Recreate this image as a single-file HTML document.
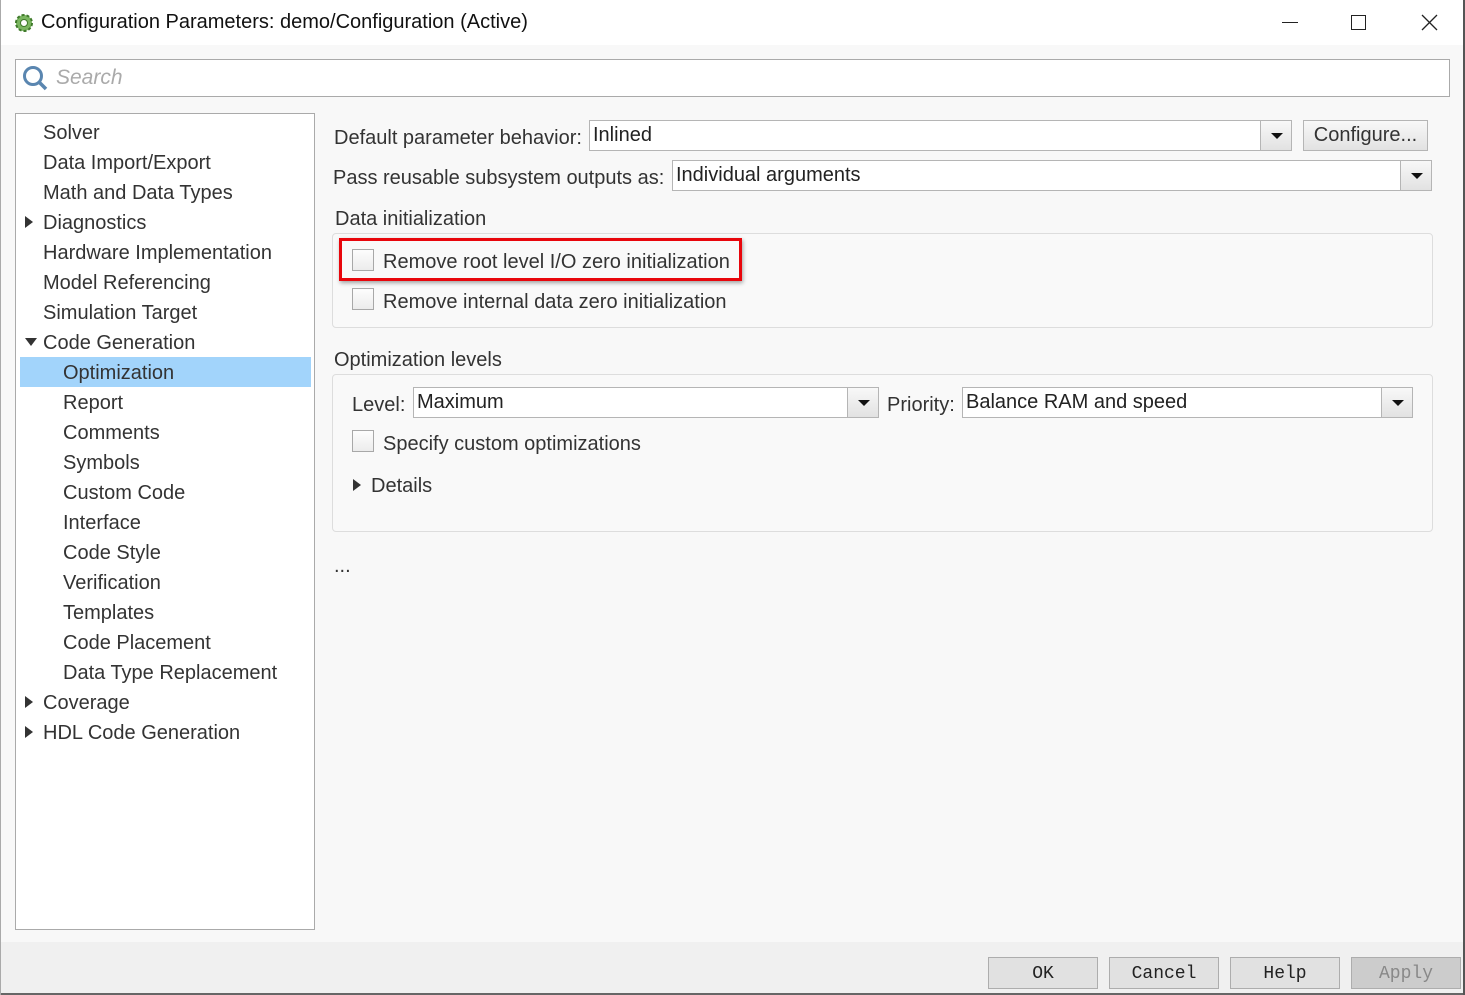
<!DOCTYPE html>
<html><head><style>
*{box-sizing:border-box;margin:0;padding:0}
body{width:1465px;height:995px;background:#f8f8f8;font-family:"Liberation Sans",sans-serif;color:#333;position:relative;overflow:hidden}
.a{position:absolute}
.t{font-size:20px;white-space:nowrap}
.tree div{position:absolute;font-size:20px;white-space:nowrap;color:#333}
.dd{position:absolute;background:#fff;border:1px solid #b5b5b5;font-size:20px;padding-left:3px;line-height:29px;color:#222}
.dd .btn{position:absolute;right:0;top:0;bottom:0;width:31px;border-left:1px solid #b5b5b5;background:linear-gradient(#f8f8f8,#e2e2e2)}
.dd .btn:after{content:"";position:absolute;left:10px;top:12px;border-left:6px solid transparent;border-right:6px solid transparent;border-top:6px solid #111}
.cb{position:absolute;width:22px;height:22px;border:1px solid #a8a8a8;background:linear-gradient(#fdfdfd,#ececec)}
.bb{position:absolute;top:957px;width:110px;height:32px;border:1px solid #adadad;background:#e1e1e1;font-family:"Liberation Mono",monospace;font-size:18px;text-align:center;line-height:33px;color:#222}
</style></head><body>
<div class="a" style="left:0;top:0;width:1465px;height:45px;background:#fff"></div>
<svg class="a" style="left:13px;top:12px" width="22" height="22" viewBox="0 0 22 22"><circle cx="11" cy="11" r="8" fill="#7bb661" stroke="#3f7a2a" stroke-width="2" stroke-dasharray="3 2"/><circle cx="11" cy="11" r="3.5" fill="#fff" stroke="#3f7a2a"/></svg>
<div class="a t" style="left:41px;top:11px;color:#111;font-size:20px">Configuration Parameters: demo/Configuration (Active)</div>
<div class="a" style="left:1282px;top:22px;width:16px;height:1px;background:#222"></div>
<div class="a" style="left:1351px;top:15px;width:15px;height:15px;border:1px solid #222"></div>
<svg class="a" style="left:1421px;top:14px" width="17" height="17"><path d="M1 1L16 16M16 1L1 16" stroke="#222" stroke-width="1.3"/></svg>
<div class="a" style="left:15px;top:59px;width:1435px;height:38px;background:#fff;border:1px solid #aaa"></div>
<svg class="a" style="left:21px;top:64px" width="28" height="28"><circle cx="12" cy="12" r="8.5" fill="none" stroke="#5a86b0" stroke-width="3"/><path d="M18 18L25 25" stroke="#5a86b0" stroke-width="3.5"/></svg>
<div class="a t" style="left:56px;top:66px;font-style:italic;color:#aaa;font-size:21px">Search</div>
<div class="a" style="left:15px;top:113px;width:300px;height:817px;background:#fff;border:1px solid #aaa"></div>
<div class="a" style="left:20px;top:357px;width:291px;height:30px;background:#a2d4fb"></div>
<div class="tree">
<div style="left:43px;top:122px">Solver</div>
<div style="left:43px;top:152px">Data Import/Export</div>
<div style="left:43px;top:182px">Math and Data Types</div>
<div style="left:43px;top:212px">Diagnostics</div>
<div style="left:43px;top:242px">Hardware Implementation</div>
<div style="left:43px;top:272px">Model Referencing</div>
<div style="left:43px;top:302px">Simulation Target</div>
<div style="left:43px;top:332px">Code Generation</div>
<div style="left:63px;top:362px">Optimization</div>
<div style="left:63px;top:392px">Report</div>
<div style="left:63px;top:422px">Comments</div>
<div style="left:63px;top:452px">Symbols</div>
<div style="left:63px;top:482px">Custom Code</div>
<div style="left:63px;top:512px">Interface</div>
<div style="left:63px;top:542px">Code Style</div>
<div style="left:63px;top:572px">Verification</div>
<div style="left:63px;top:602px">Templates</div>
<div style="left:63px;top:632px">Code Placement</div>
<div style="left:63px;top:662px">Data Type Replacement</div>
<div style="left:43px;top:692px">Coverage</div>
<div style="left:43px;top:722px">HDL Code Generation</div>
</div>
<svg class="a" style="left:24px;top:215px" width="10" height="14"><path d="M1 1L9 7L1 13Z" fill="#333"/></svg>
<svg class="a" style="left:24px;top:337px" width="14" height="10"><path d="M1 1L13 1L7 9Z" fill="#333"/></svg>
<svg class="a" style="left:24px;top:695px" width="10" height="14"><path d="M1 1L9 7L1 13Z" fill="#333"/></svg>
<svg class="a" style="left:24px;top:725px" width="10" height="14"><path d="M1 1L9 7L1 13Z" fill="#333"/></svg>

<div class="a t" style="left:334px;top:127px">Default parameter behavior:</div>
<div class="dd" style="left:589px;top:120px;width:703px;height:31px">Inlined<div class="btn"></div></div>
<div class="a" style="left:1303px;top:120px;width:125px;height:31px;border:1px solid #b5b5b5;background:linear-gradient(#f8f8f8,#e2e2e2);font-size:20px;text-align:center;line-height:29px">Configure...</div>
<div class="a t" style="left:333px;top:167px">Pass reusable subsystem outputs as:</div>
<div class="dd" style="left:672px;top:160px;width:760px;height:31px">Individual arguments<div class="btn"></div></div>
<div class="a t" style="left:335px;top:208px">Data initialization</div>
<div class="a" style="left:332px;top:233px;width:1101px;height:95px;border:1px solid #ddd;border-radius:4px;background:#f9f9f9"></div>
<div class="a" style="left:339px;top:238px;width:403px;height:43px;border:3px solid #e8060c;box-shadow:1px 2px 4px rgba(0,0,0,.35)"></div>
<div class="cb" style="left:352px;top:249px"></div>
<div class="a t" style="left:383px;top:251px">Remove root level I/O zero initialization</div>
<div class="cb" style="left:352px;top:288px"></div>
<div class="a t" style="left:383px;top:291px">Remove internal data zero initialization</div>
<div class="a t" style="left:334px;top:349px">Optimization levels</div>
<div class="a" style="left:332px;top:374px;width:1101px;height:158px;border:1px solid #ddd;border-radius:4px;background:#f9f9f9"></div>
<div class="a t" style="left:352px;top:394px">Level:</div>
<div class="dd" style="left:413px;top:387px;width:466px;height:31px">Maximum<div class="btn"></div></div>
<div class="a t" style="left:887px;top:394px">Priority:</div>
<div class="dd" style="left:962px;top:387px;width:451px;height:31px">Balance RAM and speed<div class="btn"></div></div>
<div class="cb" style="left:352px;top:430px"></div>
<div class="a t" style="left:383px;top:433px">Specify custom optimizations</div>
<svg class="a" style="left:352px;top:478px" width="10" height="14"><path d="M1 1L9 7L1 13Z" fill="#333"/></svg>
<div class="a t" style="left:371px;top:475px">Details</div>
<div class="a t" style="left:334px;top:555px">...</div>

<div class="a" style="left:0;top:942px;width:1465px;height:53px;background:#f0f0f0;border-bottom:2px solid #666"></div>
<div class="a" style="left:0;top:0;width:1px;height:995px;background:#aaa"></div>
<div class="a" style="left:1463px;top:0;width:2px;height:995px;background:#555"></div>
<div class="bb" style="left:988px">OK</div>
<div class="bb" style="left:1109px">Cancel</div>
<div class="bb" style="left:1230px">Help</div>
<div class="bb" style="left:1351px;background:#ccc;color:#888">Apply</div>
</body></html>
